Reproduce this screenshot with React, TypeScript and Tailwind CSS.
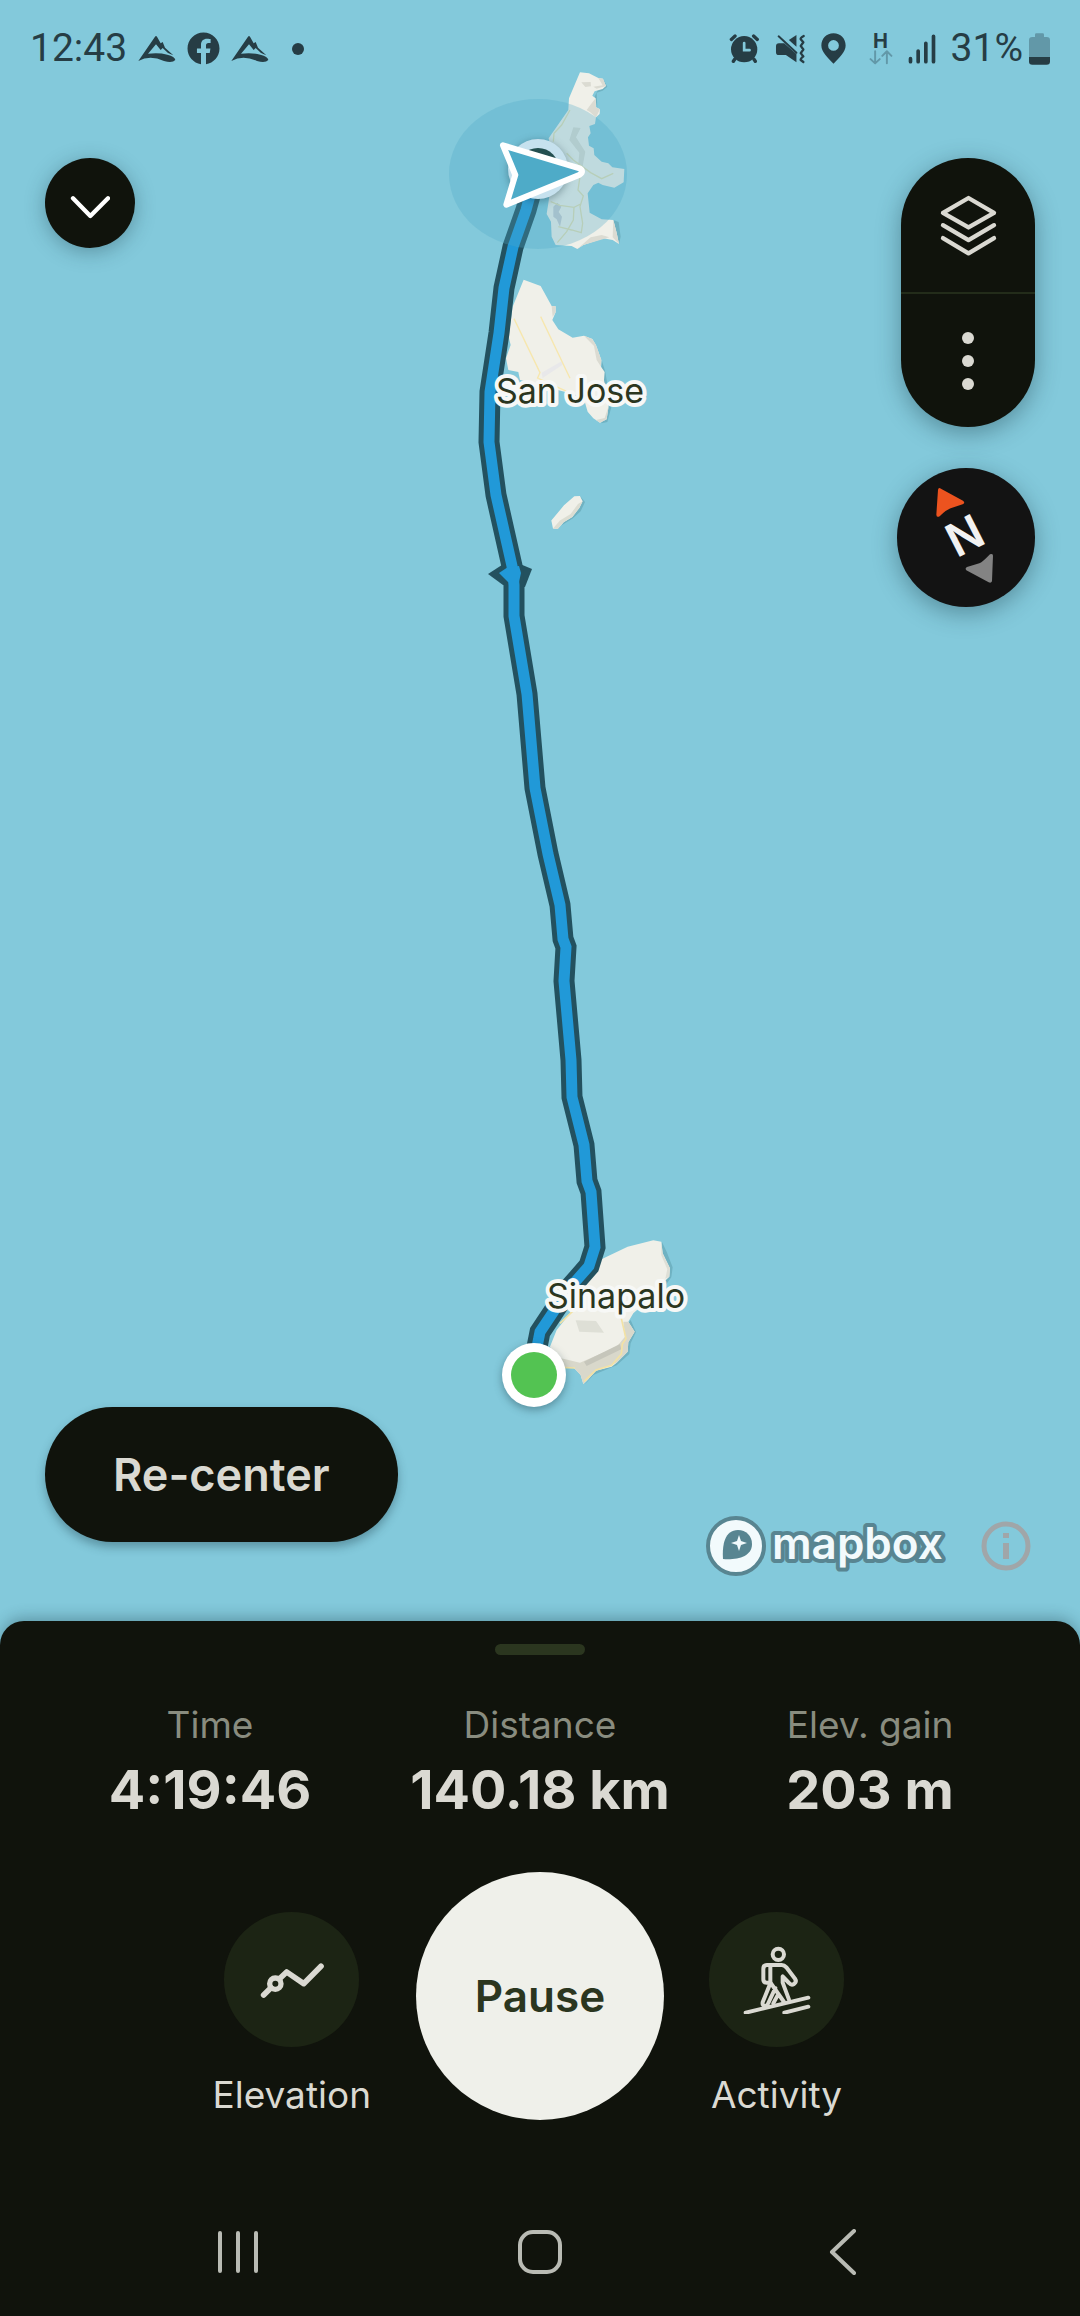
import { ReactNode } from "react";
import clsx from "clsx";
import { FaFacebook } from "react-icons/fa";

const ROUTE =
  "M537 170 L526 210 L513 247 L504 288 L499 333 L490 392 L489 442 L496 495 L512 566 L514 585 L514 616 L527 694 L535 788 L548 854 L560 905 L563 939 L566 947 L564 981 L571 1060 L572 1097 L584 1145 L587 1181 L591 1192 L595 1247 L589 1266 L568 1290 L540 1332 L537 1347 L534 1375";

const STATS = [
  { label: "Time", value: "4:19:46" },
  { label: "Distance", value: "140.18 km" },
  { label: "Elev. gain", value: "203 m" },
];

function MountainIcon() {
  return (
    <svg viewBox="419 104 114 82" className="h-7 w-[38px]" fill="currentColor">
      <path d="M420 181 L470 108 Q473 104 476 108 L487 128 L493 124 L500 141 L525 164 L509 157 L493 142 L487 148 L473 131 L449 159 Q482 155 507 162 Q530 167 531 178 Q522 188 497 181 Q455 162 420 181 Z" />
    </svg>
  );
}

function AlarmIcon() {
  return (
    <svg viewBox="88 100 92 92" className="h-[31px] w-[31px]" fill="currentColor">
      <circle cx="133" cy="148" r="39" />
      <path
        d="M95 119 L106 109 M161 109 L172 119 M105 178 L101 184 M162 178 L166 184"
        stroke="currentColor"
        strokeWidth="10"
        strokeLinecap="round"
      />
      <path d="M133 130 V151 H149" stroke="#83c9db" strokeWidth="8" strokeLinecap="round" fill="none" />
    </svg>
  );
}

function MutedVibrateIcon() {
  return (
    <svg viewBox="222 100 94 92" className="h-[31px] w-[31px]" fill="currentColor">
      <path d="M225 139 Q225 130 234 130 H250 L287 163 V188 L255 166 H234 Q225 166 225 157 Z" />
      <path d="M264 120 L287 105 V141 Z" />
      <path d="M233 109 L287 159" stroke="currentColor" strokeWidth="6" strokeLinecap="round" />
      <path
        d="M309 108 Q298 114 300 118 L308 127 L300 138 L308 149 L300 160 L308 170 Q298 178 300 181 L308 187"
        stroke="currentColor"
        strokeWidth="7"
        strokeLinecap="round"
        strokeLinejoin="round"
        fill="none"
      />
    </svg>
  );
}

function PinIcon() {
  return (
    <svg viewBox="362 100 74 92" className="h-[31px] w-[25px]" fill="currentColor" fillRule="evenodd">
      <path d="M399 101 C420 101 435 117 435 137 C435 156 416 174 399 191 C382 174 363 156 363 137 C363 117 378 101 399 101 Z M399 121 A16 16 0 1 0 399 153 A16 16 0 1 0 399 121 Z" />
    </svg>
  );
}

function MobileData() {
  return (
    <div className="flex flex-col items-center">
      <span className="font-[Inter,sans-serif] text-[20px] leading-[17px] font-bold">H</span>
      <svg
        viewBox="502 152 72 46"
        className="h-[15px] w-6 text-[#6298a8]"
        fill="none"
        stroke="currentColor"
        strokeWidth="6"
        strokeLinecap="round"
        strokeLinejoin="round"
      >
        <path d="M520 156 V193 M506 180 L520 193 L534 180 M556 193 V156 M542 170 L556 156 L570 170" />
      </svg>
    </div>
  );
}

function SignalIcon() {
  return (
    <svg
      viewBox="626 100 83 90"
      className="h-[30px] w-7"
      stroke="currentColor"
      strokeWidth="11"
      strokeLinecap="round"
    >
      <path d="M633 174 V183 M656 151 V183 M679 128 V183 M702 107 V183" />
    </svg>
  );
}

function BatteryIcon() {
  return (
    <svg viewBox="987 96 63 96" className="h-8 w-[21px]" fill="currentColor">
      <path
        d="M1005 108 V101 Q1005 97 1009 97 H1028 Q1032 97 1032 101 V108 H1040 Q1050 108 1050 118 V168 H987 V118 Q987 108 997 108 Z"
        fill="#6298a8"
      />
      <path d="M987 168 H1050 V182 Q1050 191 1040 191 H997 Q987 191 987 182 Z" />
    </svg>
  );
}

function StatusBar() {
  return (
    <header className="flex h-24 items-center justify-between px-[30px] pt-px font-[Roboto,sans-serif] text-[39px] text-[#263d45]">
      <div className="flex items-center gap-[11px]">
        <span>12:43</span>
        <MountainIcon />
        <FaFacebook className="h-[33px] w-[33px]" />
        <MountainIcon />
        <span className="ml-3 h-3 w-3 rounded-full bg-current" />
      </div>
      <div className="flex items-center gap-[15px]">
        <AlarmIcon />
        <MutedVibrateIcon />
        <PinIcon />
        <span className="ml-2">
          <MobileData />
        </span>
        <SignalIcon />
        <span className="flex items-center gap-1.5">
          31%
          <BatteryIcon />
        </span>
      </div>
    </header>
  );
}

function MapCanvas() {
  return (
    <svg
      viewBox="0 0 1080 1621"
      preserveAspectRatio="xMidYMid slice"
      className="absolute inset-0 h-full w-full"
      role="img"
      aria-label="Recorded route from Sinapalo past San Jose"
    >
      {/* northern islands */}
      <g transform="translate(420 50) scale(0.3333)">
        <path
          d="M486 75 L556 120 L530 132 L534 172 L546 182 L534 204 L514 250 L513 287 L530 312 L565 338 L590 512 L602 560 L596 584 Z M545 930 L556 966 L574 1072 L562 1116 L545 1120 Z M480 1338 L495 1356 L482 1384 L458 1406 L425 1426 Z"
          fill="none"
        />
        <path
          d="M549 86 L562 110 L548 122 L530 128 L532 172 L524 140 Z M580 510 L596 516 L602 560 L597 582 Z M545 930 L556 966 L574 1072 L562 1116 L545 1120 Z M480 1338 L495 1356 L482 1384 L458 1406 L425 1426 Z"
          fill="#6fb2c2"
        />
        <path
          d="M480 67 L507 70 L535 84 L549 86 L558 108 L548 117 L524 124 L517 137 L527 145 L528 172 L540 178 L539 192 L528 202 L525 222 L508 228 L512 250 L504 262 L507 287 L521 295 L523 315 L545 335 L565 340 L577 352 L613 357 L611 397 L583 413 L548 405 L535 398 L520 405 L503 430 L509 488 L545 508 L580 510 L590 548 L597 582 L578 570 L550 565 L490 585 L472 597 L455 588 L407 585 L395 560 L393 515 L380 492 L388 440 L400 330 L386 265 L445 180 L447 145 Z"
          fill="#f0f0e9"
        />
        <path
          d="M484 97 L512 96 L513 109 L496 111 Z M527 145 L528 172 L540 178 L528 202 L510 186 L500 180 L515 160 Z M535 84 L549 86 L558 108 L530 116 L520 110 L548 106 Z M460 232 L482 234 L468 262 L496 305 L486 360 L474 352 L478 308 L448 270 Z M580 510 L590 548 L597 582 L578 562 Z M472 597 L512 562 L545 555 L568 562 L490 585 Z"
          fill="#dbdbd2"
        />
        <path d="M400 470 L412 458 L424 470 L416 486 L426 500 L420 530 L410 508 L400 500 Z" fill="#c8ccd0" />
        <path
          d="M450 180 L425 225 L402 250 L400 275 M440 310 L460 330 L512 368 L545 386 L580 370 M480 380 L474 420 L490 438 L480 470 L488 520 L484 548 L455 540 L415 530 M392 455 L420 466 L462 472 L482 462 M462 472 L460 510 L440 545 L412 578"
          fill="none"
          stroke="#e4dfb4"
          strokeWidth="4"
        />
        <path
          d="M311 689 L362 708 L395 768 L407 769 L407 787 L397 810 L415 838 L458 863 L492 857 L517 867 L528 885 L544 930 L543 950 L554 966 L552 990 L566 1068 L560 1108 L540 1118 L520 1105 L503 1085 L490 1040 L300 990 L295 966 L265 960 L258 925 L272 885 L266 860 L278 770 Z"
          fill="#f0f0e9"
        />
        <path d="M395 768 L407 769 L407 787 L398 800 Z M492 857 L517 867 L528 885 L544 930 L543 950 L530 930 L522 888 Z M566 1068 L560 1108 L540 1118 L528 1110 L554 1104 Z" fill="#dbdbd2" />
        <path d="M365 968 L425 934 L428 944 L368 984 Z" fill="#e8e8ea" />
        <path d="M282 806 L360 968 L352 986 M362 800 L450 985 M355 985 L440 1024" fill="none" stroke="#f7e7ae" strokeWidth="4" />
        <path d="M463 1339 L480 1338 L488 1354 L478 1374 L457 1401 L431 1417 L413 1437 L399 1436 L394 1412 L432 1366 Z" fill="#f0f0e9" />
        <path d="M488 1354 L478 1374 L457 1401 L431 1417 L413 1437 L399 1436 L420 1412 L452 1392 L474 1362 Z" fill="#dcddd2" />
      </g>

      {/* southern island */}
      <g transform="translate(460 1180) scale(0.3333)">
        <path d="M606 186 L620 215 L638 262 L634 292 L610 325 Z M512 420 L528 456 L512 490 L508 522 L470 556 L400 585 L374 614 Z" fill="#6fb2c2" />
        <path
          d="M420 240 L440 230 L503 200 L580 181 L604 185 L608 220 L630 265 L628 290 L618 300 L600 330 L520 400 L505 425 L524 455 L505 487 L503 515 L470 548 L455 560 L408 572 L385 598 L370 612 L362 585 L340 562 L300 560 L270 500 L290 450 L330 400 L360 290 Z"
          fill="#f0f0e9"
        />
        <path d="M604 185 L608 220 L630 265 L628 290 L616 296 L622 268 L604 226 Z M347 421 L408 423 L432 458 L358 455 Z" fill="#dedfd6" />
        <path d="M490 425 L505 425 L524 455 L505 487 L503 515 L470 548 L408 572 L385 598 L370 612 L362 585 L340 562 L300 560 L285 530 L360 548 L470 500 L495 470 Z" fill="#d9d8cb" />
        <path d="M372 545 L480 492 L484 508 L380 558 Z" fill="#c6c6bb" />
        <path d="M484 415 L498 476 L487 492 L484 522 L455 556 L408 570 L372 604 M300 562 L345 564 M340 392 L300 430" fill="none" stroke="#f3e2a4" strokeWidth="5" />
      </g>

      <path d="M488 574 L505 563 L520 564 L532 569 L525 587 L503 585 Z" fill="#23515f" />
      <path d={ROUTE} fill="none" stroke="#23515f" strokeWidth="21" />
      <path d={ROUTE} fill="none" stroke="#2199d8" strokeWidth="11" />
      <path d="M499 573 L508 567 L519 566 L521 573 L519 582 L508 582 Z" fill="#2199d8" />

      {/* start point */}
      <circle
        cx="534"
        cy="1375"
        r="32"
        fill="#ffffff"
        className="drop-shadow-[0_3px_4px_rgba(20,50,60,0.4)]"
      />
      <circle cx="534" cy="1375" r="23" fill="#53c352" />

      {/* current position with accuracy halo */}
      <ellipse cx="538" cy="174" rx="89" ry="75" fill="#4ea9c7" opacity="0.3" />
      <circle
        cx="538"
        cy="169"
        r="30"
        fill="#c6e1ee"
        className="drop-shadow-[0_2px_4px_rgba(20,50,60,0.4)]"
      />
      <circle cx="538" cy="169" r="21" fill="#234f50" />
      <g transform="translate(420 50) scale(0.3333)">
        <path
          d="M249 286 L479 355 Q493 364 479 374 L259 464 L286 375 Z"
          fill="#4eabc8"
          stroke="#ffffff"
          strokeWidth="18"
          strokeLinejoin="round"
        />
      </g>

      <g
        className="font-[Inter,sans-serif] text-[34px]"
        fill="#2b361f"
        stroke="#f7f8f6"
        strokeWidth="8"
        strokeLinejoin="round"
        paintOrder="stroke"
        textAnchor="middle"
      >
        <text x="570" y="403">San Jose</text>
        <text x="616" y="1308">Sinapalo</text>
      </g>
    </svg>
  );
}

function CompassButton() {
  return (
    <button
      aria-label="Reset north"
      className="flex h-[139px] w-[138px] items-center justify-center rounded-full bg-[#131313] shadow-[0_6px_24px_rgba(20,50,60,0.4)]"
    >
      <svg viewBox="0 0 138 140" className="h-[140px] w-[138px]">
        <g transform="translate(-37 -228) scale(0.3333)">
          <path
            d="M243 746 Q235 741 234 750 L229 824 Q230 834 239 829 Q258 810 272 805 L308 793 Q317 788 309 782 Z"
            fill="#ec531f"
          />
          <path
            d="M390 943 Q400 940 399 948 L396 1024 Q393 1031 386 1027 L319 991 Q314 985 321 981 L358 970 Q366 968 390 943 Z"
            fill="#838383"
          />
        </g>
        <text
          x="68"
          y="84"
          textAnchor="middle"
          transform="rotate(-27 68 68)"
          fill="#f2f2f2"
          className="font-[Inter,sans-serif] text-[46px] font-semibold"
        >
          N
        </text>
      </svg>
    </button>
  );
}

function MapControls() {
  return (
    <div className="mt-[62px] flex items-start justify-between px-[45px]">
      <button
        aria-label="Collapse"
        className="flex h-[90px] w-[90px] items-center justify-center rounded-full bg-[#10130c] pt-1 shadow-[0_4px_20px_rgba(20,50,60,0.35)]"
      >
        <svg
          viewBox="210 548 120 120"
          className="h-10 w-10"
          fill="none"
          stroke="#ffffff"
          strokeWidth="13"
          strokeLinecap="round"
          strokeLinejoin="round"
        >
          <path d="M219 588 L271 641 L324 588" />
        </svg>
      </button>

      <div className="flex flex-col items-end gap-[41px]">
        <div className="flex w-[134px] flex-col divide-y-2 divide-[#232c1a] rounded-full bg-[#10130c] shadow-[0_6px_24px_rgba(20,50,60,0.4)]">
          <button aria-label="Map layers" className="flex h-[136px] items-center justify-center">
            <svg
              viewBox="715 580 172 190"
              className="h-[63px] w-[57px]"
              fill="none"
              stroke="#dad9d2"
              strokeWidth="13"
              strokeLinecap="round"
              strokeLinejoin="round"
            >
              <path d="M801 592 L878 637 L801 681 L724 637 Z M724 674 L801 719 L878 674 M724 713 L801 759 L878 713" />
            </svg>
          </button>
          <button aria-label="More options" className="flex h-[133px] items-center justify-center">
            <svg viewBox="0 0 12 58" className="h-[58px] w-3" fill="#dad9d2">
              <circle cx="6" cy="6" r="6" />
              <circle cx="6" cy="29" r="6" />
              <circle cx="6" cy="52" r="6" />
            </svg>
          </button>
        </div>
        <CompassButton />
      </div>
    </div>
  );
}

function MapboxLogo() {
  return (
    <svg viewBox="0 0 240 60" className="h-[60px] w-[240px]" role="img" aria-label="Mapbox">
      <circle cx="30" cy="30" r="28" fill="#f2fafc" stroke="#588591" strokeWidth="4" />
      <path
        d="M17 43 C16 28 19 14 32 14 C40 14 46 20 46 28 C46 41 31 44 17 43 Z"
        fill="#588591"
      />
      <path d="M33 19 L35 25 L41 27 L35 29 L33 35 L31 29 L25 27 L31 25 Z" fill="#f2fafc" />
      <text
        x="66"
        y="43"
        fill="#f2fafc"
        stroke="#588591"
        strokeWidth="8"
        strokeLinejoin="round"
        paintOrder="stroke"
        className="font-[Inter,sans-serif] text-[44px] font-semibold"
      >
        mapbox
      </text>
    </svg>
  );
}

function MapFooter() {
  return (
    <div className="mt-auto flex items-end justify-between px-[45px] pb-[45px]">
      <button className="mb-[34px] h-[135px] rounded-full bg-[#10130c] px-[68px] text-[45px] font-semibold text-[#dad9d2] shadow-[0_5px_10px_rgba(20,50,60,0.35)]">
        Re-center
      </button>
      <div className="flex items-center gap-[31px]">
        <MapboxLogo />
        <button aria-label="Map attribution" className="flex h-[60px] w-[58px] items-center justify-center">
          <svg viewBox="0 0 50 50" className="h-[50px] w-[50px]">
            <circle cx="25" cy="25" r="22" fill="none" stroke="#a0a6a9" strokeWidth="5" />
            <path d="M22 12 H28 V17 H22 Z M22 22 H28 V38 H22 Z" fill="#a0a6a9" />
          </svg>
        </button>
      </div>
    </div>
  );
}

function ActionButton({
  label,
  className,
  children,
}: {
  label: string;
  className?: string;
  children: ReactNode;
}) {
  return (
    <button className={clsx("mt-10 flex flex-col items-center gap-[26px]", className)}>
      <span className="flex h-[135px] w-[135px] items-center justify-center rounded-full bg-[#1c2414]">
        <svg
          viewBox="0 0 204 204"
          className="h-[68px] w-[68px]"
          fill="none"
          stroke="#dad9d2"
          strokeLinecap="round"
          strokeLinejoin="round"
        >
          {children}
        </svg>
      </span>
      <span className="text-[37px] leading-[44px] text-[#dad9d2]">{label}</span>
    </button>
  );
}

function RecorderSheet() {
  return (
    <section className="relative rounded-t-3xl bg-[#10130c] pt-[23px] shadow-[0_-4px_14px_rgba(20,50,60,0.3)]">
      <div className="mx-auto h-[11px] w-[90px] rounded-full bg-[#2b361f]" />

      <dl className="mt-12 grid grid-cols-3 px-[45px] text-center">
        {STATS.map((s) => (
          <div key={s.label}>
            <dt className="text-[37px] leading-[44px] text-[#898c7f]">{s.label}</dt>
            <dd className="mt-3 text-[54px] leading-[62px] font-bold text-[#dad9d2]">{s.value}</dd>
          </div>
        ))}
      </dl>

      <div className="mt-[51px] grid grid-cols-[1fr_auto_1fr] items-start gap-x-[45px]">
        <ActionButton label="Elevation" className="justify-self-end">
          <g transform="translate(-233 -256)" strokeWidth="17">
            <path d="M250 403 L272 381 M300 352 L319 334 L370 369 L422 317" />
            <circle cx="285" cy="369" r="17" strokeWidth="16" />
          </g>
        </ActionButton>
        <button className="h-[248px] w-[248px] rounded-full bg-[#eff0ea] text-[44px] font-semibold text-[#2b361f]">
          Pause
        </button>
        <ActionButton label="Activity" className="justify-self-start">
          <g transform="translate(-729 -256)" strokeWidth="12">
            <circle cx="835" cy="281" r="17" />
            <path d="M811 313 H801 Q790 313 790 325 V356 Q790 366 800 366 H811 M811 313 V368" />
            <path d="M811 313 H845 Q853 313 859 320 L885 354 Q891 363 882 370 Q874 375 867 367 L848 347 V366 L867 417" />
            <path d="M811 368 L788 425 Q786 436 797 436 Q803 434 805 427 L826 382 M813 368 L852 424 M834 402 L820 428" />
            <path d="M737 456 L925 411 M853 456 L925 438" />
          </g>
        </ActionButton>
      </div>

      <nav
        aria-label="System"
        className="mt-[68px] grid h-32 grid-cols-3 place-items-center px-[87px] text-[#b9bbb4]"
      >
        <button aria-label="Recent apps">
          <svg viewBox="0 0 46 46" className="h-[46px] w-[46px]" stroke="currentColor" strokeWidth="4" strokeLinecap="round">
            <path d="M5 4 V42 M23 4 V42 M41 4 V42" />
          </svg>
        </button>
        <button aria-label="Home">
          <svg viewBox="0 0 46 46" className="h-[46px] w-[46px]" fill="none" stroke="currentColor" strokeWidth="4">
            <rect x="3" y="3" width="40" height="40" rx="13" />
          </svg>
        </button>
        <button aria-label="Back">
          <svg
            viewBox="0 0 46 46"
            className="h-[46px] w-[46px]"
            fill="none"
            stroke="currentColor"
            strokeWidth="4"
            strokeLinecap="round"
            strokeLinejoin="round"
          >
            <path d="M35 2 L13 23 L35 44" />
          </svg>
        </button>
      </nav>
    </section>
  );
}

export default function App() {
  return (
    <div className="flex min-h-screen flex-col bg-[#83c9db] font-[Inter,sans-serif]">
      <main className="relative flex flex-1 flex-col">
        <MapCanvas />
        <div className="relative flex flex-1 flex-col">
          <StatusBar />
          <MapControls />
          <MapFooter />
        </div>
      </main>
      <RecorderSheet />
    </div>
  );
}
